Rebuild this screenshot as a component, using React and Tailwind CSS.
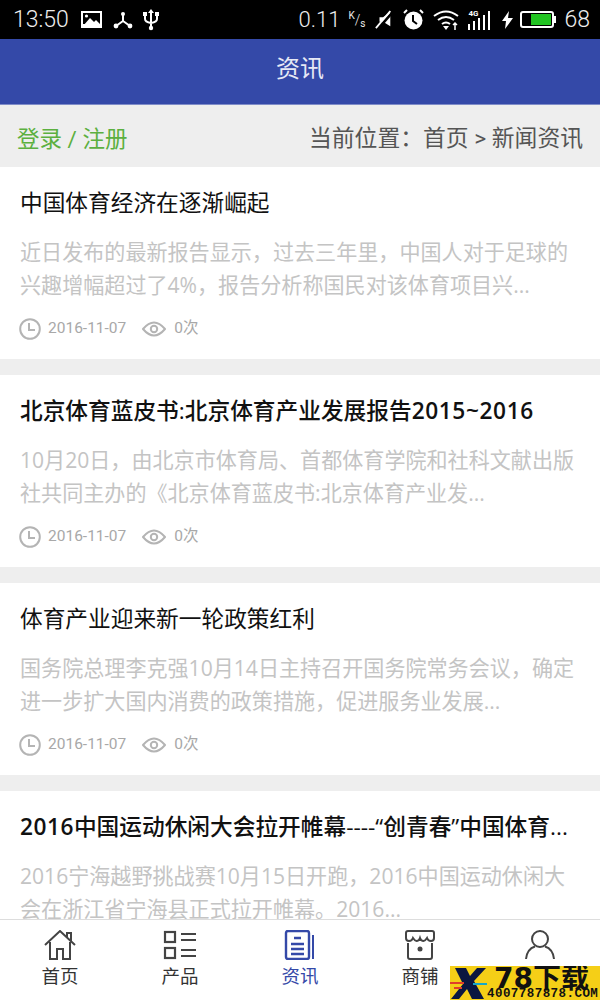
import React from 'react';

const news = [
  {
    title: '中国体育经济在逐渐崛起',
    lines: ['近日发布的最新报告显示，过去三年里，中国人对于足球的', '兴趣增幅超过了4%，报告分析称国民对该体育项目兴...'],
  },
  {
    title: <>北京体育蓝皮书:北京体育产业发展报告<span className="font-semibold tracking-[0.6px]">2015~2016</span></>,
    strong: true,
    lines: ['10月20日，由北京市体育局、首都体育学院和社科文献出版', '社共同主办的《北京体育蓝皮书:北京体育产业发...'],
  },
  {
    title: '体育产业迎来新一轮政策红利',
    lines: ['国务院总理李克强10月14日主持召开国务院常务会议，确定', '进一步扩大国内消费的政策措施，促进服务业发展...'],
  },
  {
    title: <><span className="font-semibold tracking-[0.5px]">2016</span>中国运动休闲大会拉开帷幕----“创青春”中国体育...</>,
    strong: true,
    lines: ['2016宁海越野挑战赛10月15日开跑，2016中国运动休闲大', '会在浙江省宁海县正式拉开帷幕。2016...'],
  },
];

const StatusBar = () => (
  <div className="flex h-[39px] shrink-0 items-center justify-between bg-black pl-[13px] pr-[10px] text-white">
    <div className="flex items-center">
      <span className="text-[23px] font-light leading-none text-[#eeeeee]">13:50</span>
      <svg className="ml-[12px]" width="21" height="17" viewBox="0 0 21 17">
        <rect width="21" height="17" fill="#fff" />
        <rect x="2" y="2" width="17" height="11" fill="#000" />
        <circle cx="5.5" cy="5" r="1.6" fill="#fff" />
        <path d="M2 15 L9 7 L13 11 L15 9 L21 15 Z" fill="#fff" />
      </svg>
      <svg className="ml-[11px]" width="20" height="18" viewBox="0 0 20 18" fill="none" stroke="#fff" strokeWidth="2">
        <path d="M10 3 V10 L3 15 M10 10 L17 15" />
        <circle cx="10" cy="3" r="2" fill="#fff" stroke="none" />
        <circle cx="3" cy="15" r="2.4" fill="#fff" stroke="none" />
        <circle cx="17" cy="15" r="2.4" fill="#fff" stroke="none" />
      </svg>
      <svg className="ml-[10px]" width="16" height="22" viewBox="0 0 16 22" fill="none" stroke="#fff" strokeWidth="2">
        <path d="M8 3 V19 M2 6 V10 Q2 13 8 14 Q14 13 14 10 V6" />
        <path d="M5 4 L8 0 L11 4 Z" fill="#fff" stroke="none" />
        <rect x="0" y="3" width="4" height="4" fill="#fff" stroke="none" />
        <rect x="12" y="3" width="4" height="4" fill="#fff" stroke="none" />
        <circle cx="8" cy="19" r="2.2" fill="#fff" stroke="none" />
      </svg>
    </div>
    <div className="flex items-center">
      <span className="text-[22px] font-light leading-none text-[#eeeeee]">0.11</span>
      <span className="ml-[8px] flex h-[18px] items-start text-[10px] leading-none text-[#eeeeee]">
        K<span className="text-[14px] font-light leading-[18px]">/</span><span className="mt-[8px]">s</span>
      </span>
      <svg className="ml-[10px]" width="18" height="20" viewBox="0 0 20 22">
        <path d="M5 8 H9 L17 2 V18 L9 13 H5 Z" fill="#fff" />
        <path d="M3 21 L19 3" stroke="#000" strokeWidth="3" />
        <path d="M1 20 L17 1" stroke="#fff" strokeWidth="2" />
      </svg>
      <svg className="ml-[10px]" width="21" height="21" viewBox="0 0 21 21">
        <circle cx="10.5" cy="11.5" r="9" fill="#fff" />
        <path d="M10 6 V12 L14 15" stroke="#000" strokeWidth="2" fill="none" />
        <path d="M1 4 L4 1 M20 4 L17 1" stroke="#fff" strokeWidth="2" />
      </svg>
      <svg className="ml-[9px]" width="26" height="20" viewBox="0 0 26 20" fill="none" stroke="#fff" strokeWidth="2">
        <path d="M1 6 Q13 -3 25 6" />
        <path d="M5 10 Q13 4 21 10" />
        <path d="M9 14 Q13 11 17 14" />
        <path d="M10 16 H16 L13 20 Z" fill="#fff" stroke="none" />
        <path d="M22 13 V20 M20 15 L22 13 L24 15" strokeWidth="1.5" />
      </svg>
      <div className="relative ml-[9px] flex h-[20px] w-[27px] items-end gap-[3px]">
        <span className="absolute left-0 top-0 text-[8px] font-bold leading-none text-white">4G</span>
        <div className="h-[6px] w-[2px] bg-white" />
        <div className="h-[9px] w-[2px] bg-white" />
        <div className="h-[12px] w-[2px] bg-white" />
        <div className="h-[15px] w-[2px] bg-white" />
        <div className="h-[19px] w-[2px] bg-white" />
      </div>
      <svg className="ml-[7px]" width="11" height="18" viewBox="0 0 11 18">
        <path d="M7 0 L0 10 H4 L3 18 L11 7 H6 Z" fill="#fff" />
      </svg>
      <div className="ml-[7px] flex h-[17px] w-[34px] items-center rounded-[3px] border-2 border-white pl-[9px] pr-[1px]">
        <div className="h-[11px] w-full bg-[#22c422]" />
      </div>
      <div className="h-[7px] w-[2px] bg-white" />
      <span className="ml-[8px] text-[23px] font-light leading-none text-[#eeeeee]">68</span>
    </div>
  </div>
);

const ClockIcon = () => (
  <svg width="22" height="22" viewBox="0 0 22 22" fill="none" stroke="#b4b4b4" strokeWidth="2">
    <circle cx="11" cy="11" r="9.8" />
    <path d="M10 5 V12 H16" />
  </svg>
);

const EyeIcon = () => (
  <svg width="24" height="18" viewBox="0 0 24 18" fill="none" stroke="#b4b4b4" strokeWidth="2">
    <path d="M1 9 Q12 -4 23 9 Q12 22 1 9 Z" />
    <circle cx="12" cy="9" r="3.2" />
  </svg>
);

const NewsCard = ({ item }) => (
  <div className="mb-[16px] h-[192px] shrink-0 bg-white pl-[20px] pt-[19px]">
    <h3 className={`whitespace-nowrap font-['Open_Sans','Noto_Sans_CJK_SC',sans-serif] text-[22.7px] leading-[33px] text-[#111111] ${item.strong ? 'font-medium' : 'font-normal'}`}>{item.title}</h3>
    <div className="mt-[16px] font-['Open_Sans','Noto_Sans_CJK_SC',sans-serif] text-[21.08px] leading-[33px] text-[#c4c4c4]">
      {item.lines.map((line) => (
        <p key={line} className="whitespace-nowrap">{line}</p>
      ))}
    </div>
    <div className="-ml-px mt-[17px] flex h-[22px] items-center text-[#a8a8a8]">
      <ClockIcon />
      <span className="ml-[7px] text-[15.5px] leading-none">2016-11-07</span>
      <div className="ml-[16px]"><EyeIcon /></div>
      <span className="ml-[8px] text-[15.5px] leading-none">0次</span>
    </div>
  </div>
);

const NavItem = ({ label, active, children }) => (
  <div className="flex flex-1 flex-col items-center">
    <div className="flex h-[34px] items-center justify-center">{children}</div>
    <span className={`mt-[3px] text-[18.5px] leading-[24px] ${active ? 'text-[#3449a8]' : 'text-[#333333]'}`}>{label}</span>
  </div>
);

const BottomNav = () => (
  <div className="flex h-[81px] shrink-0 border-t border-[#dddddd] bg-white pt-[8px]">
    <NavItem label="首页">
      <svg width="32" height="30" viewBox="0 0 32 30" fill="none" stroke="#444444" strokeWidth="2">
        <path d="M1 15 L16 1 L31 15" />
        <path d="M23 8 V3 H27 V11" />
        <path d="M6 12 V29 H13 V19 H19 V29 H26 V12" />
      </svg>
    </NavItem>
    <NavItem label="产品">
      <svg width="34" height="30" viewBox="0 0 34 30" fill="none" stroke="#444444" strokeWidth="2.2">
        <rect x="2" y="2" width="10" height="10" />
        <rect x="2" y="18" width="10" height="10" />
        <path d="M18 4 H33 M18 10 H33 M18 20 H33 M18 26 H33" />
      </svg>
    </NavItem>
    <NavItem label="资讯" active>
      <svg width="32" height="30" viewBox="0 0 32 30" fill="none" stroke="#3449a8" strokeWidth="2">
        <path d="M25 3 V27 Q25 29 23 29 H4 Q2 29 2 27 V3 Q2 1 4 1 H23 Q25 1 25 3 Z" strokeWidth="2.4" />
        <path d="M29 5 V29" />
        <path d="M10 8 H17 M7 14 H20 M7 19 H20 M7 24 H20" strokeWidth="2.4" />
      </svg>
    </NavItem>
    <NavItem label="商铺">
      <svg width="30" height="30" viewBox="0 0 30 30" fill="none" stroke="#444444" strokeWidth="2">
        <path d="M3 1 H27 Q29 1 29 3 V8 Q29 11 26 11 Q23 11 22 8 Q20 11 18.5 11 Q16 11 15 8 Q14 11 11.500 11 Q10 11 8 8 Q7 11 4 11 Q1 11 1 8 V3 Q1 1 3 1 Z" />
        <path d="M3 13 V27 Q3 29 5 29 H25 Q27 29 27 27 V13" />
        <circle cx="15" cy="19" r="2.500" fill="#444444" stroke="none" />
      </svg>
    </NavItem>
    <NavItem label="">
      <svg width="30" height="30" viewBox="0 0 30 30" fill="none" stroke="#444444" strokeWidth="2">
        <circle cx="15" cy="9" r="8" />
        <path d="M1 29 Q2 19 10 16.500 M29 29 Q28 19 20 16.500" />
      </svg>
    </NavItem>
  </div>
);

// 右下角下载站水印
const Watermark = () => (
  <div className="absolute bottom-0 right-0 flex h-[34px] w-[150px] overflow-hidden bg-[#f5cf17]">
    <svg className="shrink-0" width="37" height="34" viewBox="0 0 37 34">
      <path d="M5 2 H16 L20 10 L27 2 H36 L24 15 L34 33 H22 L17 23 L9 33 H1 L13 18 Z" fill="#0b1740" />
      <path d="M0 16 H14 V18 H0 Z" fill="#e0402a" />
      <path d="M4 21 H12 V23 H4 Z" fill="#e0402a" />
      <path d="M23 17 H37 V19 H23 Z" fill="#18a8c8" />
    </svg>
    <div className="flex min-w-0 flex-1 flex-col items-start">
      <span className="ml-[7px] h-[23px] whitespace-nowrap font-['DejaVu_Sans','Noto_Sans_CJK_SC',sans-serif] text-[28px] font-bold leading-[26px] text-[#111111]">78下载</span>
      <span className="whitespace-nowrap font-['Liberation_Mono',monospace] text-[12.5px] font-bold leading-[11px] tracking-[0.45px] text-[#111111]">4007787878.COM</span>
    </div>
  </div>
);

export default function App() {
  return (
    <div className="relative flex h-[1000px] w-[600px] flex-col overflow-hidden bg-[#eeeeee]">
      <div className="flex h-full flex-col font-['Roboto','Noto_Sans_CJK_SC',sans-serif]">
        <StatusBar />
        <div className="flex h-[66px] shrink-0 items-center justify-center border-b border-[#7f8cc8] bg-[#3449a8] pb-[5px]">
          <span className="text-[24px] leading-none text-[#e6e8f5]">资讯</span>
        </div>
        <div className="flex h-[62px] shrink-0 items-center justify-between bg-[#eeeeee] px-[17px] pt-[7px]">
          <span className="text-[22.5px] text-[#5cb040]">登录 / 注册</span>
          <span className="text-[22.8px] text-[#555555]">当前位置：首页 &gt; 新闻资讯</span>
        </div>
        <div className="flex min-h-0 flex-1 flex-col overflow-hidden">
          {news.map((item, i) => (
            <NewsCard key={i} item={item} />
          ))}
        </div>
        <BottomNav />
      </div>
      <Watermark />
    </div>
  );
}
